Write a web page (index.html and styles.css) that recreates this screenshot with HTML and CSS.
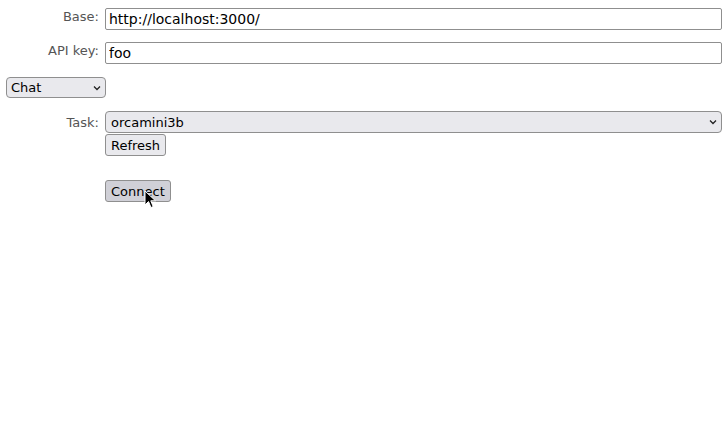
FILE: index.html
```html
<!DOCTYPE html>
<html>
<head>
<meta charset="utf-8">
<link rel="stylesheet" href="styles.css">
</head>
<body>
<div class="page">
  <div class="row">
    <label class="lbl">Base:</label>
    <input class="field" type="text" value="http://localhost:3000/">
  </div>
  <div class="row row-key">
    <label class="lbl">API key:</label>
    <input class="field" type="text" value="foo">
  </div>
  <div class="mode">
    <div class="sel sel-mode">
      <span>Chat</span>
      <svg class="chev" width="8" height="6" viewBox="0 0 8 6"><path d="M1 1.5 L4 4.5 L7 1.5" fill="none" stroke="#222" stroke-width="1.3"/></svg>
    </div>
  </div>
  <div class="row task">
    <label class="lbl">Task:</label>
    <div class="col">
      <div class="sel sel-task">
        <span>orcamini3b</span>
        <svg class="chev" width="8" height="6" viewBox="0 0 8 6"><path d="M1 1.5 L4 4.5 L7 1.5" fill="none" stroke="#222" stroke-width="1.3"/></svg>
      </div>
      <div><button class="btn">Refresh</button></div>
      <div class="connect-wrap">
        <button class="btn hover">Connect</button>
        <svg class="cursor" width="13" height="19" viewBox="0 0 13 19"><path d="M1 1 L1 15 L4.5 11.5 L7 17.5 L9.2 16.6 L6.8 10.8 L11.5 10.8 Z" fill="#000" stroke="#fff" stroke-width="1"/></svg>
      </div>
    </div>
  </div>
</div>
</body>
</html>
```
FILE: styles.css
```css
html, body {
  margin: 0;
  padding: 0;
  background: #fff;
}
.page {
  padding: 8px 3px 0 6px;
  font-family: "DejaVu Sans", Verdana, sans-serif;
}
.row {
  display: grid;
  grid-template-columns: 93px 1fr;
  column-gap: 6px;
  margin-bottom: 12px;
}
.row-key {
  margin-bottom: 13px;
}
.lbl {
  text-align: right;
  font-size: 13px;
  color: #555;
  padding-top: 1px;
  line-height: 15px;
}
.field {
  box-sizing: border-box;
  height: 22px;
  margin: 0;
  border: 1px solid #8f8f8f;
  border-radius: 2px;
  padding: 0 3px;
  font-family: "DejaVu Sans", Verdana, sans-serif;
  font-size: 14px;
  color: #000;
  background: #fff;
  outline: none;
}
.mode {
  margin-bottom: 13px;
}
.sel {
  box-sizing: border-box;
  display: flex;
  align-items: center;
  justify-content: space-between;
  height: 21px;
  border: 1px solid #8f8f8f;
  border-radius: 4px;
  background: #e9e9ed;
  font-size: 13px;
  color: #000;
  padding: 0 5px;
}
.sel-mode {
  width: 100px;
  height: 21px;
  padding-left: 4px;
  padding-right: 4px;
}
.sel-task {
  height: 22px;
  padding-right: 4px;
}
.task .lbl {
  padding-top: 4px;
}
.col {
  display: flex;
  flex-direction: column;
  align-items: stretch;
}
.col > div:nth-child(2) {
  margin-top: 1px;
}
.btn {
  box-sizing: border-box;
  height: 22px;
  margin: 0;
  border: 1px solid #8f8f8f;
  border-radius: 3px;
  background: #e9e9ed;
  font-family: "DejaVu Sans", Verdana, sans-serif;
  font-size: 13px;
  color: #000;
  padding: 0 5px;
}
.btn.hover {
  background: #d0d0d7;
}
.connect-wrap {
  position: relative;
  margin-top: 24px;
}
.cursor {
  position: absolute;
  left: 39px;
  top: 10px;
}
```
